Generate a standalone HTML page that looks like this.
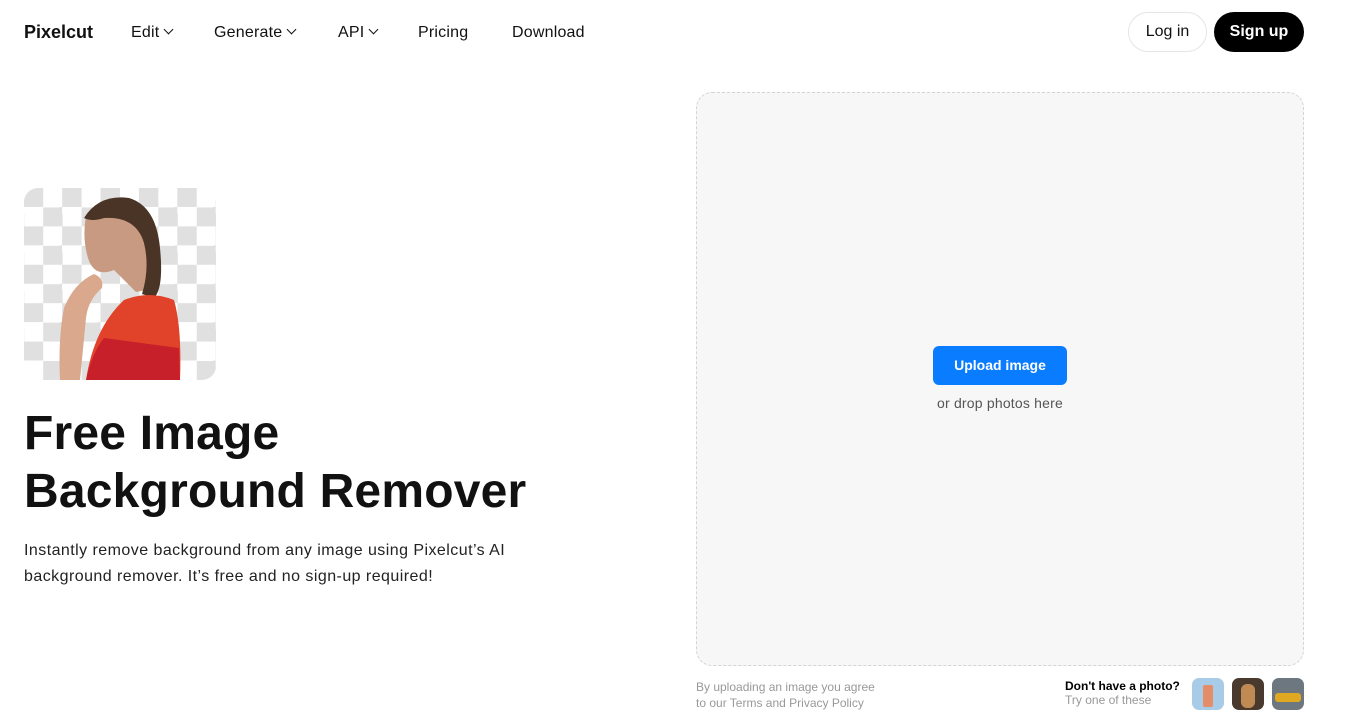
<!DOCTYPE html>
<html><head><meta charset="utf-8"><style>
*{margin:0;padding:0;box-sizing:border-box}
body{width:1365px;height:724px;background:#fff;font-family:"Liberation Sans",Arial,sans-serif;color:#111;position:relative;overflow:hidden}
.a{position:absolute}
.nav{font-size:16px;top:24px;color:#111;letter-spacing:0.2px}
.chev{display:inline-block;width:7px;height:7px;border-right:1.5px solid #111;border-bottom:1.5px solid #111;transform:rotate(45deg);margin-left:6px;position:relative;top:-4px}
.btn{border-radius:20px;height:40px;font-size:16px;line-height:40px;text-align:center}
.check{left:24px;top:188px;width:192px;height:192px;border-radius:14px;overflow:hidden;
background:conic-gradient(#e0e0e0 0 25%,#fff 0 50%,#e0e0e0 0 75%,#fff 0);background-size:38.4px 38.4px;background-position:19.2px 0}
</style></head><body>
<div class="a" style="left:24px;top:22px;font-size:18px;font-weight:bold">Pixelcut</div>
<div class="a nav" style="left:131px">Edit<span class="chev"></span></div>
<div class="a nav" style="left:214px">Generate<span class="chev"></span></div>
<div class="a nav" style="left:338px">API<span class="chev"></span></div>
<div class="a nav" style="left:418px">Pricing</div>
<div class="a nav" style="left:512px">Download</div>
<div class="a btn" style="left:1128px;top:12px;width:79px;border:1px solid #e5e5e5;line-height:38px">Log in</div>
<div class="a btn" style="left:1214px;top:12px;width:90px;background:#000;color:#fff;font-weight:bold">Sign up</div>

<div class="a check">
<svg width="192" height="192" viewBox="0 0 192 192" style="position:absolute;left:0;top:0">
<path d="M62 28 Q78 8 105 12 Q130 18 134 50 Q138 85 132 100 L112 104 Q100 92 90 82 Q70 90 64 70 Q58 50 62 28Z" fill="#c89a82"/>
<path d="M60 30 Q75 6 105 10 Q132 18 136 60 Q140 100 130 110 L118 106 Q126 80 120 55 Q112 28 80 30 Q68 34 60 30Z" fill="#4a3426"/>
<path d="M100 112 Q125 102 150 112 Q158 140 156 192 L62 192 Q70 140 100 112Z" fill="#e0432a"/>
<path d="M62 192 Q68 165 80 150 L155 160 L156 192Z" fill="#c8202a"/>
<path d="M40 120 Q50 95 70 86 Q80 90 78 100 Q64 112 62 130 L56 192 L36 192 Q34 150 40 120Z" fill="#d9a88d"/>
</svg></div>

<div class="a" style="left:24px;top:405px;font-size:48px;font-weight:bold;line-height:58px;letter-spacing:0.2px">Free Image<br>Background Remover</div>
<div class="a" style="left:24px;top:538px;font-size:16px;line-height:26px;color:#222;letter-spacing:0.45px">Instantly remove background from any image using Pixelcut’s AI<br>background remover. It’s free and no sign-up required!</div>

<div class="a" style="left:696px;top:92px;width:608px;height:574px;background:#f7f7f7;border:1px dashed #d4d4d4;border-radius:16px"></div>
<div class="a" style="left:933px;top:346px;width:134px;height:39px;background:#0a7cff;border-radius:6px;color:#fff;font-weight:bold;font-size:14px;line-height:39px;text-align:center">Upload image</div>
<div class="a" style="left:696px;width:608px;top:395px;text-align:center;font-size:14px;color:#555;letter-spacing:0.2px">or drop photos here</div>

<div class="a" style="left:696px;top:679px;font-size:12px;line-height:16px;color:#999">By uploading an image you agree<br>to our Terms and Privacy Policy</div>
<div class="a" style="left:1065px;top:679px;font-size:12px;line-height:14px"><b style="color:#000">Don't have a photo?</b><br><span style="color:#999">Try one of these</span></div>
<div class="a" style="left:1192px;top:678px;width:32px;height:32px;border-radius:7px;background:#a8cbe8"><div style="position:absolute;left:11px;top:7px;width:10px;height:22px;background:#e58d68;border-radius:2px"></div></div>
<div class="a" style="left:1232px;top:678px;width:32px;height:32px;border-radius:7px;background:#4a3a2e"><div style="position:absolute;left:9px;top:6px;width:14px;height:24px;background:#c08a55;border-radius:6px"></div></div>
<div class="a" style="left:1272px;top:678px;width:32px;height:32px;border-radius:7px;background:#6c7780"><div style="position:absolute;left:3px;top:15px;width:26px;height:9px;background:#e0a820;border-radius:3px"></div></div>
</body></html>
